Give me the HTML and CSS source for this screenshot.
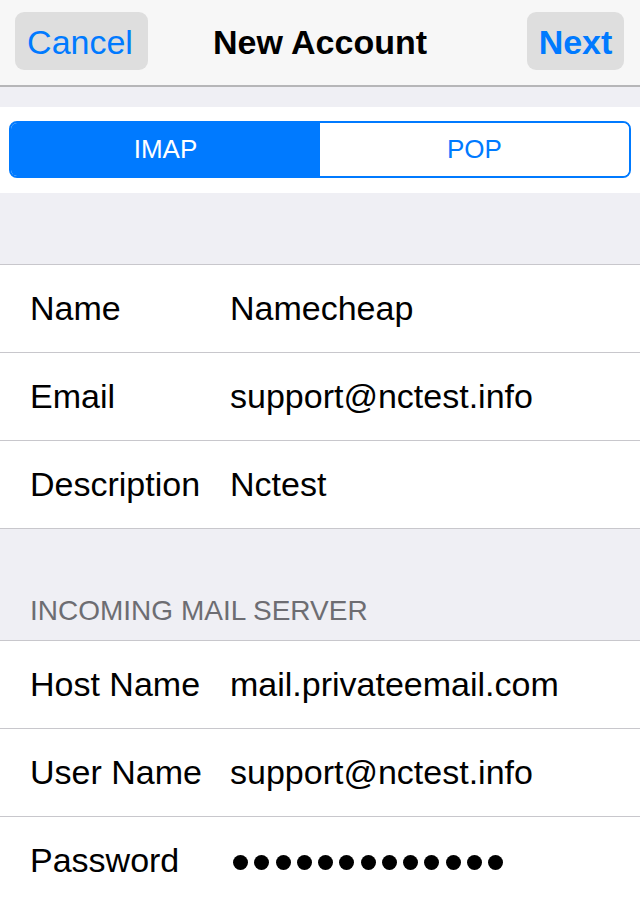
FILE: index.html
```html
<!DOCTYPE html>
<html>
<head>
<meta charset="utf-8">
<title>New Account</title>
<link rel="stylesheet" href="styles.css">
</head>
<body>
<div class="screen">
  <header class="navbar">
    <span class="nav-btn cancel">Cancel</span>
    <span class="nav-title">New Account</span>
    <span class="nav-btn next">Next</span>
  </header>
  <div class="spacer-top"></div>
  <div class="seg-wrap">
    <div class="segmented">
      <span class="seg seg-active">IMAP</span>
      <span class="seg">POP</span>
    </div>
  </div>
  <div class="spacer-mid"></div>
  <section class="group">
    <div class="row"><span class="label">Name</span><span class="value">Namecheap</span></div>
    <div class="row"><span class="label">Email</span><span class="value">support@nctest.info</span></div>
    <div class="row"><span class="label">Description</span><span class="value">Nctest</span></div>
  </section>
  <div class="section-header">INCOMING MAIL SERVER</div>
  <section class="group">
    <div class="row"><span class="label">Host Name</span><span class="value">mail.privateemail.com</span></div>
    <div class="row"><span class="label">User Name</span><span class="value">support@nctest.info</span></div>
    <div class="row"><span class="label">Password</span><span class="value dots"><i></i><i></i><i></i><i></i><i></i><i></i><i></i><i></i><i></i><i></i><i></i><i></i><i></i></span></div>
  </section>
</div>
</body>
</html>
```
FILE: styles.css
```css
* { box-sizing: border-box; }
html, body { margin: 0; padding: 0; }
body {
  background: #efeff4;
  font-family: "Liberation Sans", Arial, Helvetica, sans-serif;
  color: #000;
  width: 640px;
  height: 904px;
  overflow: hidden;
}
.screen { display: flex; flex-direction: column; }

.navbar {
  height: 87px;
  background: #f7f7f7;
  border-bottom: 2px solid #b6b6b8;
  display: grid;
  grid-template-columns: 1fr auto 1fr;
  align-items: start;
  padding: 12px 16px 0 15px;
}
.nav-btn {
  height: 58px;
  background: #dedede;
  border-radius: 9px;
  color: #007aff;
  font-size: 34px;
  display: flex;
  align-items: center;
  justify-content: center;
  padding-top: 2px;
}
.cancel { width: 133px; justify-self: start; padding-right: 3px; }
.next { width: 97px; font-weight: bold; justify-self: end; }
.nav-title {
  font-size: 34px;
  font-weight: bold;
  height: 58px;
  display: flex;
  align-items: center;
  padding-top: 2px;
  padding-left: 1px;
}

.spacer-top { height: 20px; }
.seg-wrap {
  background: #fff;
  height: 86px;
  padding: 14px 9px 0 9px;
}
.segmented {
  height: 57px;
  border: 2px solid #007aff;
  border-radius: 8px;
  display: flex;
  overflow: hidden;
}
.seg {
  flex: 1;
  display: flex;
  align-items: center;
  justify-content: center;
  font-size: 26px;
  color: #007aff;
  background: #fff;
}
.seg-active { background: #007aff; color: #fff; }

.spacer-mid { height: 71px; }

.group {
  background: #fff;
  border-top: 1.5px solid #c8c7cc;
  border-bottom: 1px solid #c8c7cc;
}
.row {
  height: 88px;
  display: flex;
  align-items: center;
  padding-left: 30px;
  font-size: 34px;
}
.row + .row { border-top: 1px solid #c8c7cc; height: 88px; }
.group .row:first-child { height: 87px; }
.label { width: 200px; flex: none; }
.value { flex: 1; }

.section-header {
  height: 111px;
  display: flex;
  align-items: flex-end;
  padding: 0 30px 13px 30px;
  font-size: 28px;
  color: #6d6d72;
}

.dots { display: flex; gap: 6.25px; align-items: center; padding-left: 3px; padding-top: 3px; }
.dots i {
  display: block;
  width: 15px;
  height: 15px;
  border-radius: 50%;
  background: #000;
}
```
